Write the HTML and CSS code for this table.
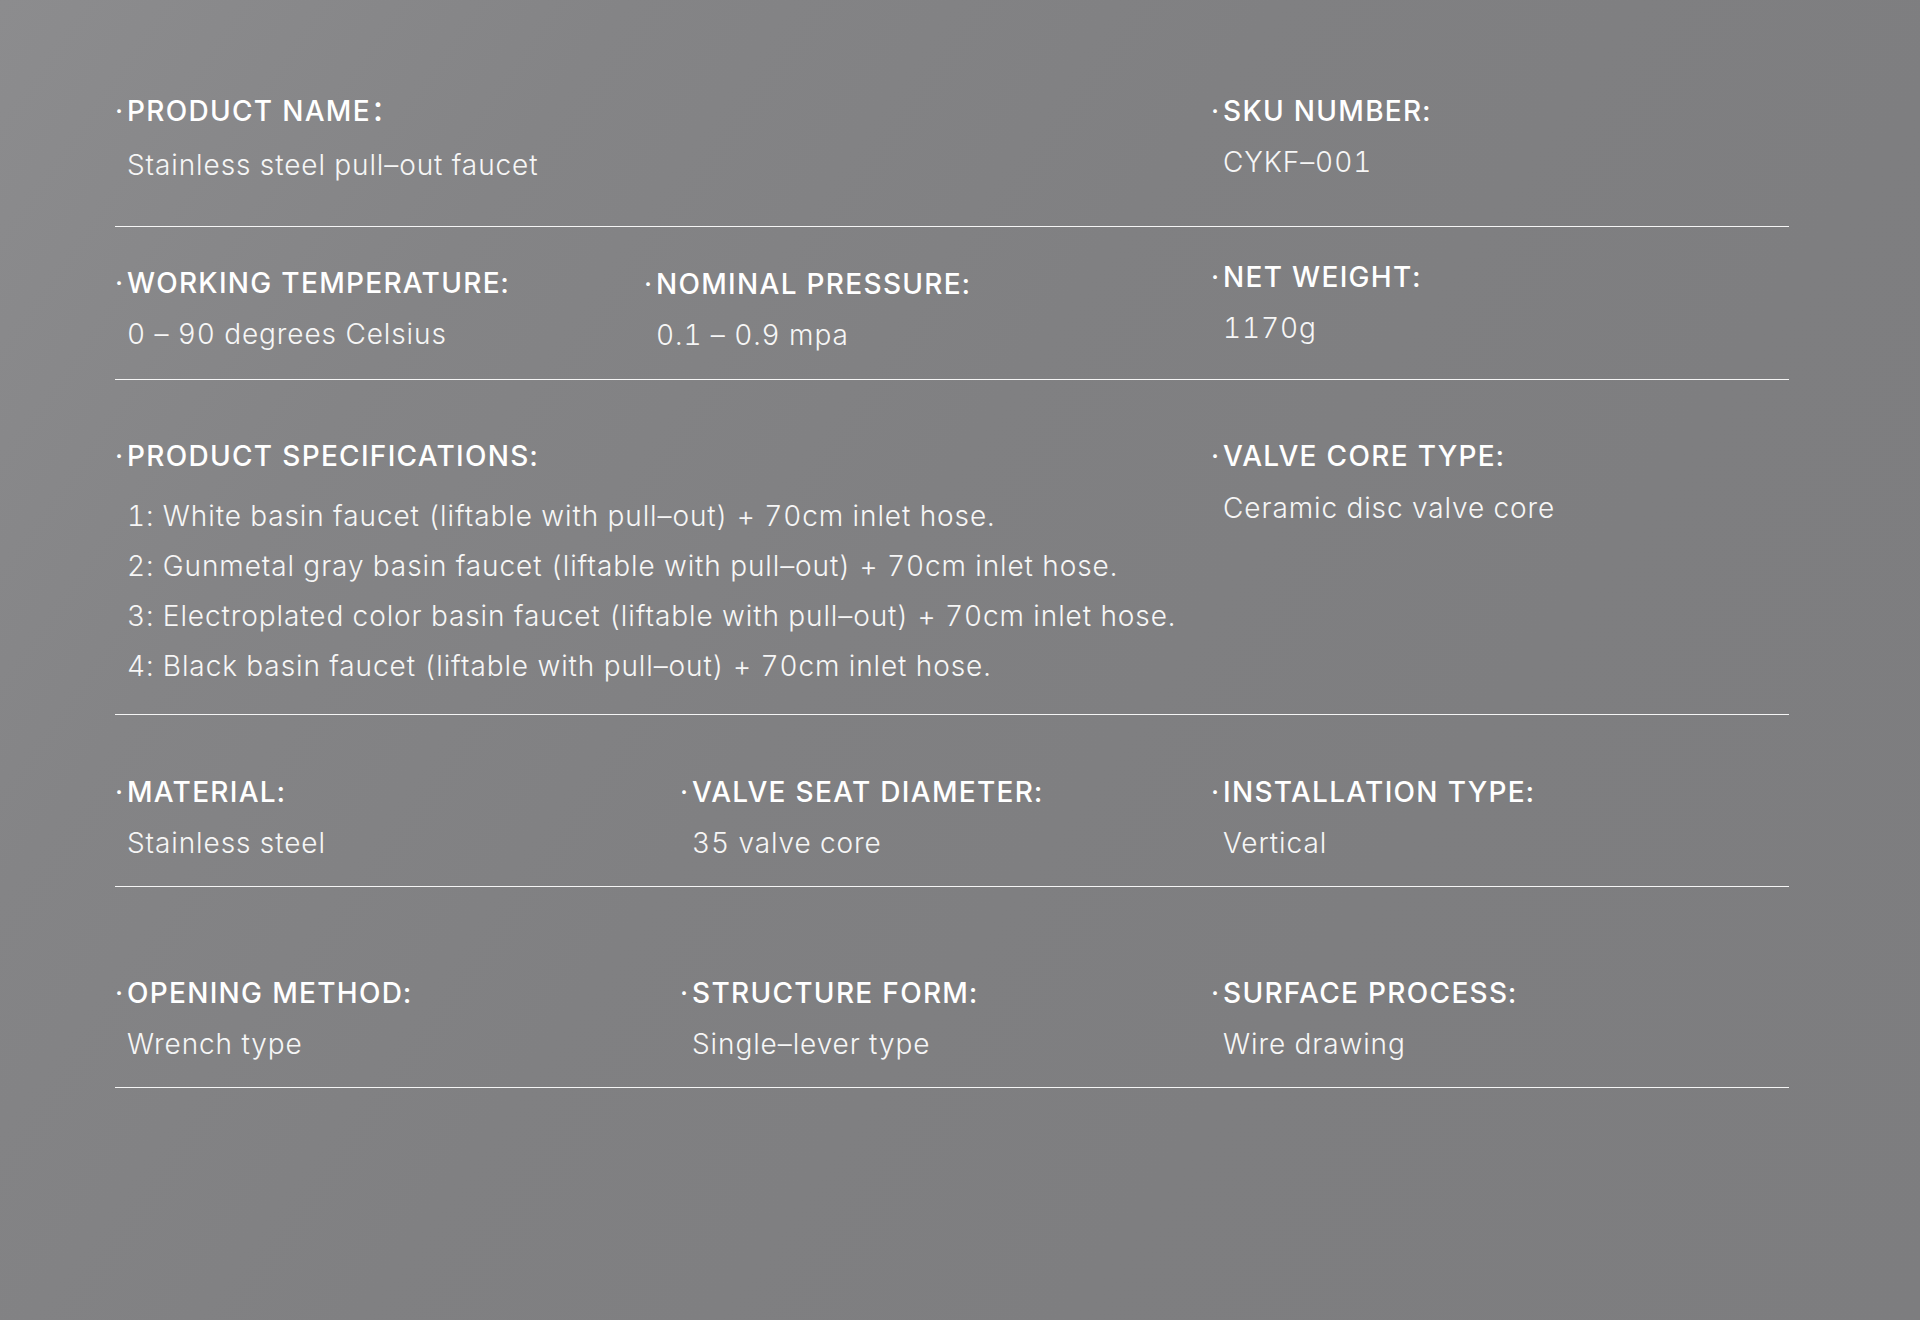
FILE: index.html
```html
<!DOCTYPE html>
<html lang="en">
<head>
<meta charset="utf-8">
<title>Product specifications</title>
<link rel="stylesheet" href="styles.css">
</head>
<body>
<main class="specs">
  <section class="row row--first cols-2">
    <div class="cell">
      <h3 class="label"><span class="dot">·</span>PRODUCT NAME：</h3>
      <p class="value">Stainless steel pull–out faucet</p>
    </div>
    <div class="cell cell--tight">
      <h3 class="label"><span class="dot">·</span>SKU NUMBER:</h3>
      <p class="value">CYKF–001</p>
    </div>
  </section>

  <section class="row row--second cols-3a">
    <div class="cell">
      <h3 class="label"><span class="dot">·</span>WORKING TEMPERATURE:</h3>
      <p class="value">0 – 90 degrees Celsius</p>
    </div>
    <div class="cell cell--low">
      <h3 class="label"><span class="dot">·</span>NOMINAL PRESSURE:</h3>
      <p class="value">0.1 – 0.9 mpa</p>
    </div>
    <div class="cell cell--raised">
      <h3 class="label"><span class="dot">·</span>NET WEIGHT:</h3>
      <p class="value">1170g</p>
    </div>
  </section>

  <section class="row row--third cols-2">
    <div class="cell">
      <h3 class="label"><span class="dot">·</span>PRODUCT SPECIFICATIONS:</h3>
      <ul class="spec-list">
        <li>1: White basin faucet (liftable with pull–out) + 70cm inlet hose.</li>
        <li>2: Gunmetal gray basin faucet (liftable with pull–out) + 70cm inlet hose.</li>
        <li>3: Electroplated color basin faucet (liftable with pull–out) + 70cm inlet hose.</li>
        <li>4: Black basin faucet (liftable with pull–out) + 70cm inlet hose.</li>
      </ul>
    </div>
    <div class="cell">
      <h3 class="label"><span class="dot">·</span>VALVE CORE TYPE:</h3>
      <p class="value value--close">Ceramic disc valve core</p>
    </div>
  </section>

  <section class="row row--fourth cols-3b">
    <div class="cell">
      <h3 class="label"><span class="dot">·</span>MATERIAL:</h3>
      <p class="value">Stainless steel</p>
    </div>
    <div class="cell">
      <h3 class="label"><span class="dot">·</span>VALVE SEAT DIAMETER:</h3>
      <p class="value">35 valve core</p>
    </div>
    <div class="cell">
      <h3 class="label"><span class="dot">·</span>INSTALLATION TYPE:</h3>
      <p class="value">Vertical</p>
    </div>
  </section>

  <section class="row row--fifth cols-3b">
    <div class="cell">
      <h3 class="label"><span class="dot">·</span>OPENING METHOD:</h3>
      <p class="value">Wrench type</p>
    </div>
    <div class="cell">
      <h3 class="label"><span class="dot">·</span>STRUCTURE FORM:</h3>
      <p class="value">Single–lever type</p>
    </div>
    <div class="cell">
      <h3 class="label"><span class="dot">·</span>SURFACE PROCESS:</h3>
      <p class="value">Wire drawing</p>
    </div>
  </section>
</main>
</body>
</html>
```

FILE: styles.css
```css
* { box-sizing: border-box; }

html, body {
  margin: 0;
  padding: 0;
}

body {
  width: 1920px;
  min-height: 1320px;
  background: linear-gradient(125deg, #8c8c8e 0%, #848486 22%, #808082 45%, #7e7e80 70%, #7d7d7f 100%);
  color: #ffffff;
  font-family: Inter, "Liberation Sans", "Noto Sans CJK SC", sans-serif;
  font-variant-numeric: tabular-nums;
}

.specs {
  width: 1674px;
  margin-left: 115px;
}

.row {
  display: grid;
  border-bottom: 1px solid rgba(255, 255, 255, 0.92);
  padding-bottom: 24px;
}

.cols-2 { grid-template-columns: 1096px 1fr; }
.cols-3a { grid-template-columns: 529px 567px 1fr; }
.cols-3b { grid-template-columns: 565px 531px 1fr; }

.row--first { padding-top: 91px; padding-bottom: 41px; }
.row--second { padding-top: 36px; padding-bottom: 24px; }
.row--third { padding-top: 56px; padding-bottom: 23px; }
.row--fourth { padding-top: 57px; padding-bottom: 23px; }
.row--fifth { padding-top: 86px; padding-bottom: 23px; }

.cell {
  padding-left: 0;
}

.cell--raised { margin-top: -6px; }
.cell--low { margin-top: 1px; }

.label {
  margin: 0;
  font-size: 28px;
  font-weight: 500;
  line-height: 40px;
  letter-spacing: 1.3px;
  color: #ffffff;
}

.dot {
  display: inline-block;
  width: 12px;
  font-weight: 400;
  letter-spacing: 0;
}

.value {
  margin: 14px 0 0;
  padding-left: 12px;
  font-size: 28px;
  font-weight: 300;
  line-height: 40px;
  letter-spacing: 0.9px;
  color: #f6f6f6;
}

.cell--tight .value { margin-top: 11px; }
.row--second .value,
.row--fourth .value,
.row--fifth .value { margin-top: 11px; }

.value--close { margin-top: 12px; }

.spec-list {
  list-style: none;
  margin: 15px 0 0;
  padding: 0 0 0 12px;
  font-size: 28px;
  font-weight: 300;
  line-height: 50px;
  letter-spacing: 0.9px;
  color: #f6f6f6;
}
```
